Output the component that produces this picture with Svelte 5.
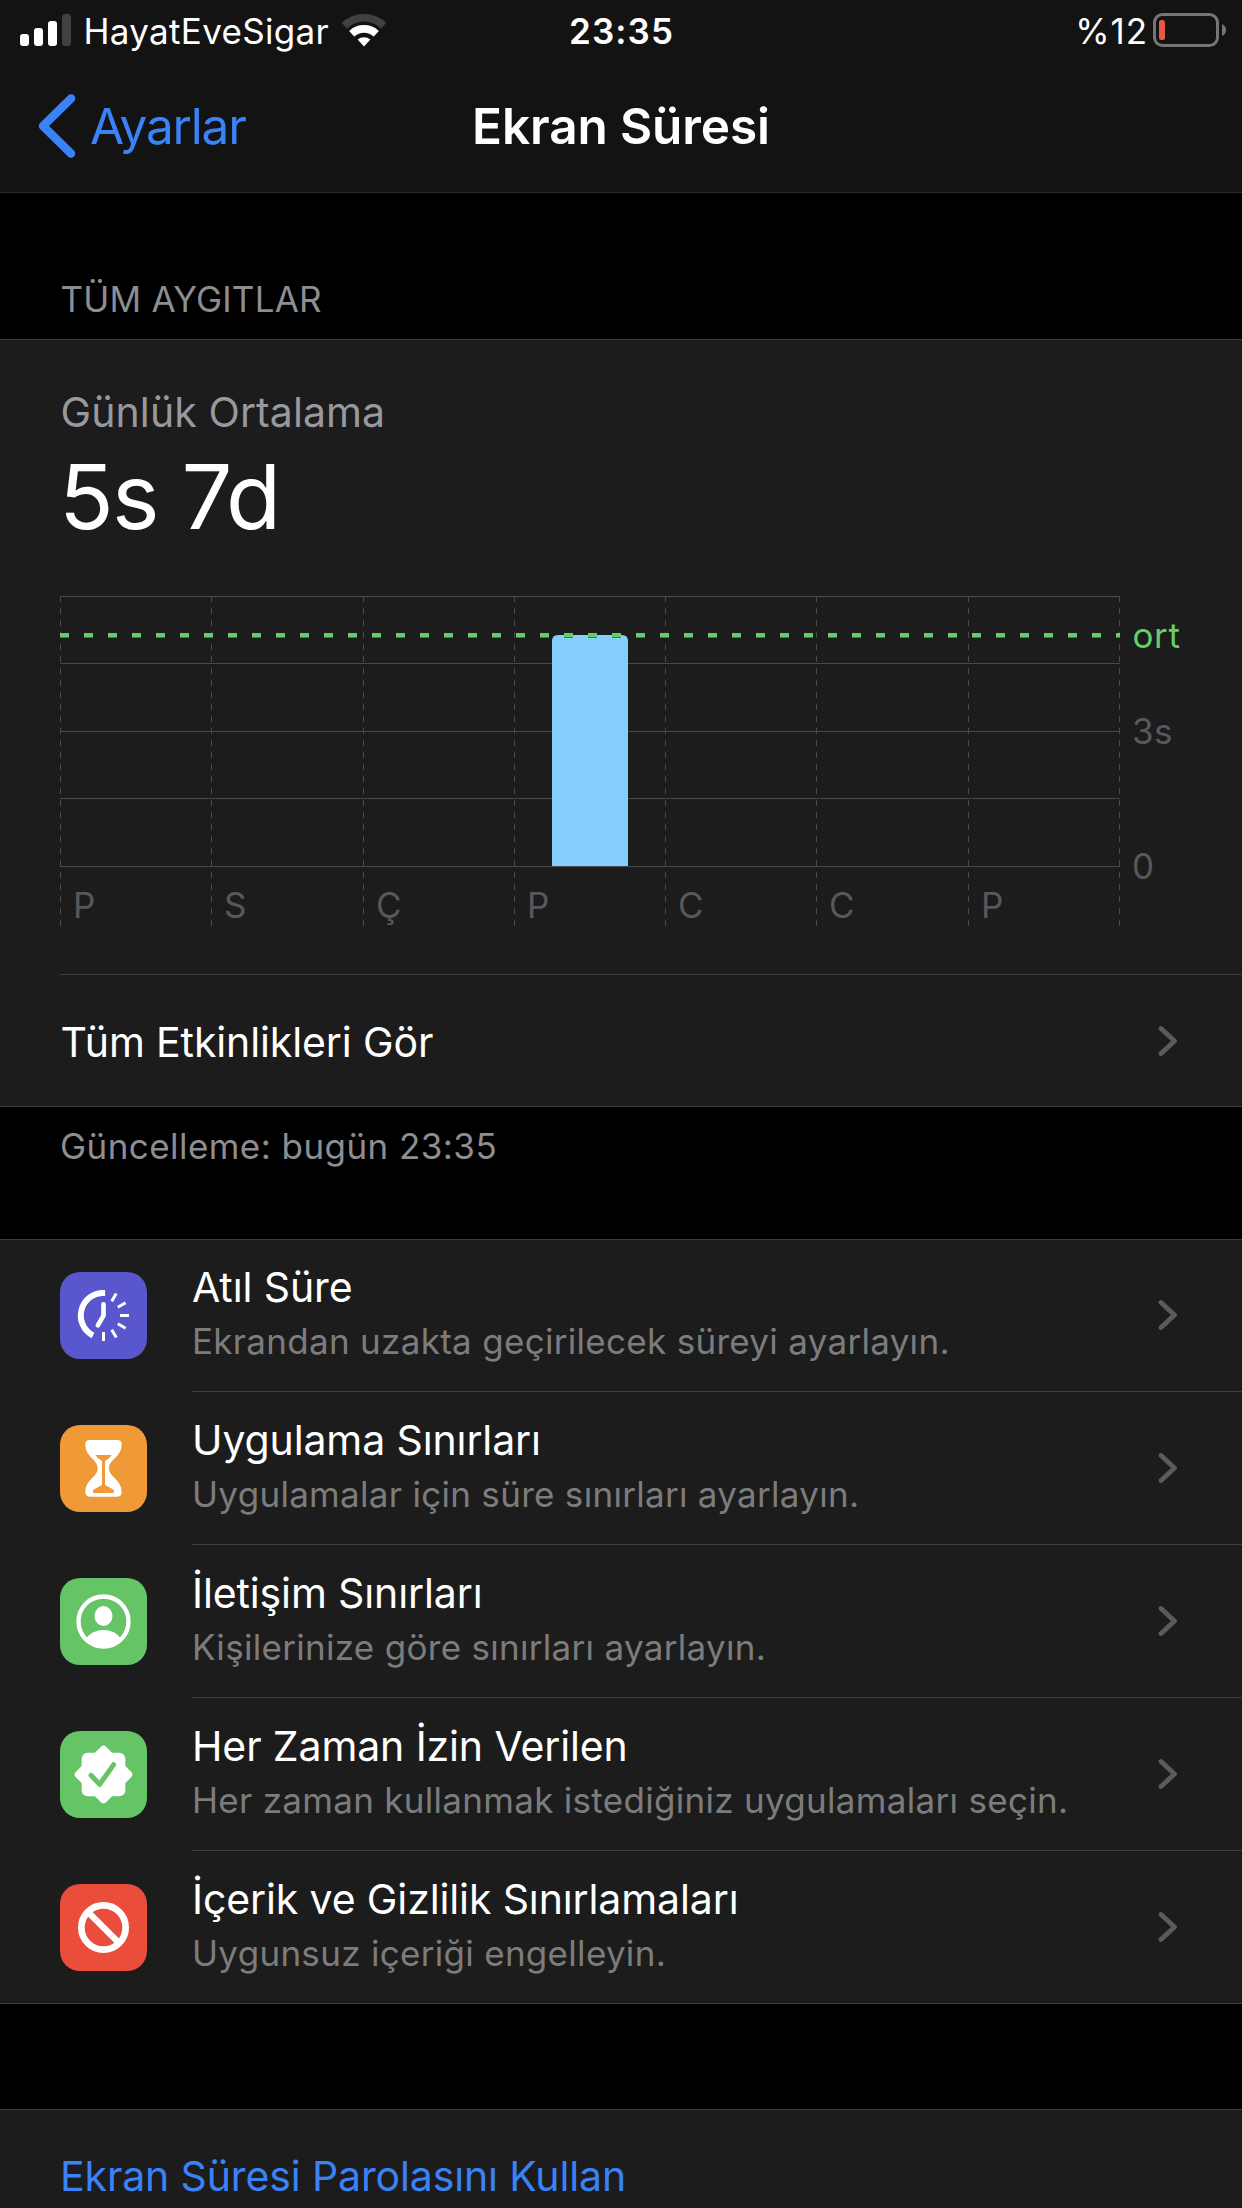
<script>
  const days = ['P', 'S', 'Ç', 'P', 'C', 'C', 'P'];

  // Chart geometry, in the units of its own viewBox
  const gridX = [0.5, 151.5, 303.5, 454.5, 605.5, 756.5, 908.5, 1059.5];
  const gridY = [0.5, 67.5, 135.5, 202.5, 270.5];

  const rows = [
    { icon: 'downtime', title: 'Atıl Süre', text: 'Ekrandan uzakta geçirilecek süreyi ayarlayın.' },
    { icon: 'limits', title: 'Uygulama Sınırları', text: 'Uygulamalar için süre sınırları ayarlayın.' },
    { icon: 'contacts', title: 'İletişim Sınırları', text: 'Kişilerinize göre sınırları ayarlayın.' },
    { icon: 'allowed', title: 'Her Zaman İzin Verilen', text: 'Her zaman kullanmak istediğiniz uygulamaları seçin.' },
    { icon: 'privacy', title: 'İçerik ve Gizlilik Sınırlamaları', text: 'Uygunsuz içeriği engelleyin.' }
  ];
</script>

{#snippet chevron()}
  <svg class="chevron" viewBox="0 0 20 32" aria-hidden="true"><path d="M3 3.5 16.5 16 3 28.5" /></svg>
{/snippet}

<div class="screen">
  <header>
    <div class="status">
      <div class="carrier">
        <svg class="signal" width="53" height="32" viewBox="0 0 53 32">
          <rect x="1" y="20" width="9" height="12" rx="3" />
          <rect x="15" y="14" width="9" height="18" rx="3" />
          <rect x="29" y="7" width="9" height="25" rx="3" />
          <rect class="dim" x="43" y="0" width="9" height="32" rx="3" />
        </svg>
        <span class="name">HayatEveSigar</span>
        <svg class="wifi" width="46" height="34" viewBox="0 0 46 34">
          <path class="outer" d="M3.2 12.6A29 29 0 0 1 42.8 12.6" />
          <path class="middle" d="M10.7 20.7A18.2 18.2 0 0 1 35.3 20.7" />
          <path class="dot" d="M23 33.4 16.6 26.6A9.8 9.8 0 0 1 29.4 26.6Z" />
        </svg>
      </div>
      <span class="time">23:35</span>
      <div class="power">
        <span class="percent">%12</span>
        <svg width="75" height="34" viewBox="0 0 75 34">
          <rect class="shell" x="2.5" y="1.5" width="63" height="31" rx="8" />
          <rect class="charge" x="7" y="7" width="6" height="20" rx="2.5" />
          <path class="nub" d="M70 11Q74 13 74 17T70 23Z" />
        </svg>
      </div>
    </div>
    <nav>
      <div class="back">
        <svg width="40" height="66" viewBox="0 0 40 66"><path d="M34 5.5 6 33 34 60.5" /></svg>
        <span>Ayarlar</span>
      </div>
      <h1>Ekran Süresi</h1>
      <div></div>
    </nav>
  </header>

  <h2>TÜM AYGITLAR</h2>

  <section class="card">
    <div class="label">Günlük Ortalama</div>
    <div class="total">5s 7d</div>
    <svg class="chart" width="1182" height="330" viewBox="0 0 1182 330">
      <g class="grid">
        {#each gridY as y}<line x1="0" x2="1060" y1={y} y2={y} />{/each}
      </g>
      <g class="grid dashed">
        {#each gridX as x}<line x1={x} x2={x} y1="0" y2="330" />{/each}
      </g>
      <path class="bar" d="M492 270V45Q492 39 498 39H562Q568 39 568 45V270Z" />
      <line class="average" x1="0" x2="1060" y1="39" y2="39" />
      <line class="average shade" x1="0" x2="1060" y1="41.5" y2="41.5" />
      {#each days as day, i}
        <text x={gridX[i] + 12.5} y="322">{day}</text>
      {/each}
      <text class="avg-label" x="1072.5" y="52">ort</text>
      <text x="1072" y="147.5">3s</text>
      <text x="1072" y="282.5">0</text>
    </svg>
    <div class="link-row">
      <span>Tüm Etkinlikleri Gör</span>
      {@render chevron()}
    </div>
  </section>

  <p class="updated">Güncelleme: bugün 23:35</p>

  <section class="list">
    {#each rows as row}
      <div class="row">
        <svg class="icon {row.icon}" viewBox="0 0 261 261">
          {#if row.icon === 'downtime'}
            <path class="line" stroke-width="18" d="M135.5 63H130.5A67.5 67.5 0 0 0 99 190.5" />
            <path class="line round" stroke-width="14" d="M130.5 97V131L113.5 160" />
            <g class="line" stroke-width="9">
              {#each [-60, -30, 0, 30, 60, 90] as angle}
                <line x1="180" x2="207" y1="130.5" y2="130.5" transform="rotate({angle} 130.5 130.5)" />
              {/each}
            </g>
          {:else if row.icon === 'limits'}
            <path class="solid" d="M89 45H172Q185 45 185 58C185 98 147 102 147 130C147 158 185 162 185 202Q185 215 172 215H89Q76 215 76 202C76 162 113 158 113 130C113 102 76 98 76 58Q76 45 89 45Z" />
            <path class="cut" d="M106 90H155Q150 100 135 108V180L161 194Q164 204 158 204H103Q97 204 99 195L126 180V108Q111 100 106 90Z" />
          {:else if row.icon === 'contacts'}
            <circle class="line" stroke-width="13" cx="130.5" cy="130.5" r="75" />
            <ellipse class="solid" cx="130.5" cy="114" rx="27" ry="30" />
            <path class="solid" d="M78 182Q96 156 130.5 156T183 182A75 75 0 0 1 78 182Z" />
          {:else if row.icon === 'allowed'}
            <rect class="solid" x="65" y="65" width="131" height="131" rx="18" />
            <rect class="solid" x="66" y="66" width="129" height="129" rx="12" transform="rotate(45 130.5 130.5)" />
            <path class="tick" d="M93 133 119 160 161 101" />
          {:else}
            <circle class="line" stroke-width="20" cx="130.5" cy="130.5" r="66.5" />
            <path class="line" stroke-width="19" d="M84 84 177 177" />
          {/if}
        </svg>
        <div class="body">
          <div class="text">
            <div class="title">{row.title}</div>
            <div class="subtitle">{row.text}</div>
          </div>
          {@render chevron()}
        </div>
      </div>
    {/each}
  </section>

  <section class="passcode">Ekran Süresi Parolasını Kullan</section>
</div>

<style>
  :global(body) {
    margin: 0;
    background: #000;
  }
  .screen {
    width: 1242px;
    height: 2208px;
    overflow: hidden;
    background: #000;
    color: #fff;
    font-family: Inter, 'Liberation Sans', sans-serif;
    font-size: 35px;
    letter-spacing: 0.32px;
    line-height: 42px;
  }
  svg {
    display: block;
    flex: none;
  }

  header {
    height: 192px;
    background: #131313;
    border-bottom: 1px solid #2a2a2a;
  }
  .status {
    display: grid;
    grid-template-columns: 1fr auto 1fr;
    align-items: center;
    height: 60px;
  }
  .status span {
    padding-top: 2px;
  }
  .carrier,
  .power {
    display: flex;
    align-items: center;
  }
  .carrier {
    padding-left: 19px;
  }
  .power {
    justify-content: flex-end;
    gap: 4px;
    padding-right: 15px;
  }
  .signal {
    fill: #fff;
  }
  .signal .dim {
    fill: #414141;
  }
  .name {
    margin: 0 12px 0 11.5px;
  }
  .wifi path {
    fill: none;
    stroke-width: 7.6;
  }
  .wifi .outer {
    stroke: #414141;
  }
  .wifi .middle {
    stroke: #fff;
  }
  .wifi .dot {
    fill: #fff;
  }
  .time {
    padding-left: 1px;
    font-weight: 600;
    letter-spacing: 1.1px;
  }
  .percent {
    letter-spacing: 0.9px;
  }
  .shell {
    fill: none;
    stroke: #757575;
    stroke-width: 3;
  }
  .charge {
    fill: #eb5545;
  }
  .nub {
    fill: #757575;
  }

  nav {
    display: grid;
    grid-template-columns: 1fr auto 1fr;
    align-items: center;
    height: 132px;
    font-size: 49.5px;
    line-height: 60px;
  }
  .back {
    display: flex;
    align-items: center;
    gap: 13px;
    padding-left: 37px;
    color: #3a82f7;
    letter-spacing: -1.2px;
  }
  .back path {
    fill: none;
    stroke: #3a82f7;
    stroke-width: 8.5;
    stroke-linecap: round;
    stroke-linejoin: round;
  }
  h1 {
    margin: 0;
    font-size: inherit;
    font-weight: 600;
    letter-spacing: -0.1px;
  }

  h2 {
    display: flex;
    align-items: flex-end;
    box-sizing: border-box;
    height: 146px;
    margin: 0;
    padding: 0 60.5px 19px;
    font-size: inherit;
    font-weight: 400;
    letter-spacing: 0.2px;
    color: #8d8d92;
  }

  .card,
  .list,
  .passcode {
    background: #1c1c1c;
    border-top: 1px solid #3d3d3f;
    border-bottom: 1px solid #3d3d3f;
  }
  .card {
    padding-left: 60px;
  }
  .label {
    padding: 47px 0 0 0.5px;
    font-size: 41px;
    line-height: 50px;
    letter-spacing: 0.1px;
    color: #98989f;
  }
  .total {
    margin: 6px 0 45px -1px;
    font-size: 90px;
    line-height: 108px;
    letter-spacing: -1.7px;
  }
  .grid line {
    stroke: #4a4a4c;
  }
  .dashed line {
    stroke-dasharray: 6 6;
  }
  .bar {
    fill: #84cffc;
  }
  .average {
    stroke: #67ce67;
    stroke-width: 4;
    stroke-dasharray: 9 15;
  }
  .average.shade {
    stroke: #3f8040;
    stroke-width: 1;
  }
  .chart text {
    fill: #58585c;
  }
  .chart .avg-label {
    fill: #67ce67;
    letter-spacing: 0.6px;
  }
  .link-row {
    display: flex;
    align-items: center;
    justify-content: space-between;
    height: 131px;
    margin-top: 48px;
    border-top: 1px solid #3d3d3f;
    font-size: 41px;
    line-height: 50px;
    letter-spacing: -0.12px;
  }
  .link-row span {
    padding: 3px 0 0 0.5px;
  }
  .chevron {
    width: 20px;
    height: 32px;
    margin-right: 64px;
  }
  .chevron path {
    fill: none;
    stroke: #5b5b5f;
    stroke-width: 4.8;
    stroke-linecap: round;
    stroke-linejoin: round;
  }

  .updated {
    box-sizing: border-box;
    height: 132px;
    margin: 0;
    padding: 18px 60px 0;
    letter-spacing: 0.44px;
    color: #8d8d92;
  }

  .row {
    display: flex;
    gap: 45px;
    height: 153px;
    padding-left: 60px;
  }
  .row:first-child {
    margin-top: -1px;
  }
  .icon {
    width: 87px;
    height: 87px;
    margin-top: 33px;
    border-radius: 20px;
  }
  .downtime {
    background: #5956ce;
  }
  .limits {
    background: #f09a37;
  }
  .contacts,
  .allowed {
    background: #65c466;
  }
  .privacy {
    background: #eb4d3d;
  }
  .line {
    fill: none;
    stroke: #fff;
  }
  .round {
    stroke-linecap: round;
    stroke-linejoin: round;
  }
  .solid {
    fill: #fff;
  }
  .cut {
    fill: #f09a37;
  }
  .tick {
    fill: none;
    stroke: #65c466;
    stroke-width: 15;
    stroke-linecap: round;
    stroke-linejoin: round;
  }
  .body {
    display: flex;
    flex: 1;
    align-items: center;
    justify-content: space-between;
    border-bottom: 1px solid #3d3d3f;
  }
  .row:last-child {
    height: 152px;
  }
  .row:last-child .body {
    border-bottom: 0;
  }
  .text {
    align-self: flex-start;
    padding-top: 23px;
  }
  .title {
    font-size: 41px;
    line-height: 50px;
    letter-spacing: -0.12px;
  }
  .subtitle {
    margin-top: 8px;
    letter-spacing: 0.3px;
    color: #7c7c7c;
  }

  .passcode {
    height: 99px;
    margin-top: 105px;
    padding: 41px 60px 0;
    border-bottom: 0;
    box-sizing: border-box;
    font-size: 41px;
    line-height: 50px;
    letter-spacing: -0.13px;
    color: #3a82f7;
  }
</style>
